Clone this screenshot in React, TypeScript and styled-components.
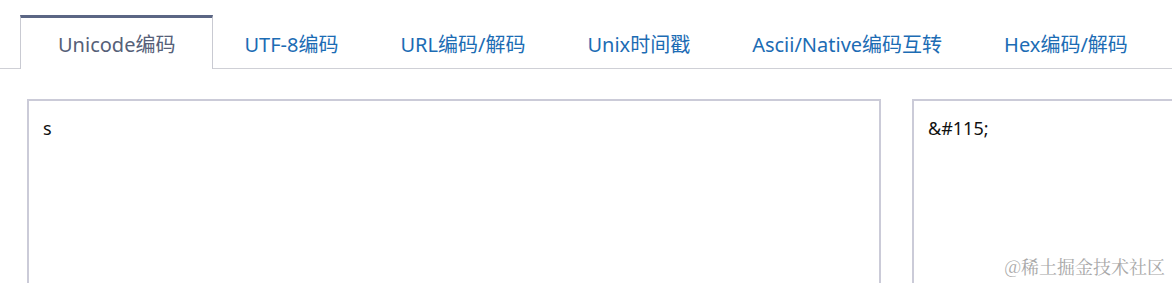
import React, { useState } from 'react';
import styled, { createGlobalStyle } from 'styled-components';

const TABS = [
  'Unicode编码',
  'UTF-8编码',
  'URL编码/解码',
  'Unix时间戳',
  'Ascii/Native编码互转',
  'Hex编码/解码',
];

const toEntities = (text: string) =>
  Array.from(text)
    .map((ch) => `&#${ch.codePointAt(0)};`)
    .join('');

const App = () => {
  const [active, setActive] = useState(0);
  const [source, setSource] = useState('s');

  return (
    <Page>
      <GlobalStyle />
      <TabBar>
        {TABS.map((label, i) => (
          <Tab key={label} $active={i === active} onClick={() => setActive(i)}>
            {label}
          </Tab>
        ))}
      </TabBar>
      <Panels>
        <Editor value={source} onChange={(e) => setSource(e.target.value)} />
        <Editor value={toEntities(source)} readOnly />
      </Panels>
      <Watermark>@稀土掘金技术社区</Watermark>
    </Page>
  );
};

export default App;

const GlobalStyle = createGlobalStyle`
  html, body {
    margin: 0;
    padding: 0;
    background: #fff;
    overflow: hidden;
  }
  body {
    font-family: "Noto Sans", "Noto Sans CJK SC", sans-serif;
  }
`;

const Page = styled.div`
  position: relative;
  width: 1172px;
  height: 283px;
  overflow: hidden;
  background: #fff;
`;

const TabBar = styled.div`
  display: flex;
  align-items: flex-end;
  margin-top: 15px;
  padding-left: 20px;
  height: 53px;
  border-bottom: 1px solid #cfd0d6;
`;

const Tab = styled.div<{ $active: boolean }>`
  box-sizing: border-box;
  height: ${(p) => (p.$active ? '54px' : '53px')};
  margin-bottom: ${(p) => (p.$active ? '-1px' : '0')};
  padding: 0 ${(p) => (p.$active ? '37px' : '30px')};
  display: flex;
  align-items: center;
  font-size: 20px;
  color: ${(p) => (p.$active ? '#566078' : '#1c6cb4')};
  background: #fff;
  border-top: 3px solid ${(p) => (p.$active ? '#5b6684' : 'transparent')};
  border-left: 1px solid ${(p) => (p.$active ? '#c9cad2' : 'transparent')};
  border-right: 1px solid ${(p) => (p.$active ? '#c9cad2' : 'transparent')};
  white-space: nowrap;
  cursor: pointer;
`;

const Panels = styled.div`
  display: flex;
  gap: 31px;
  margin-top: 30px;
  padding-left: 27px;
`;

const Editor = styled.textarea`
  box-sizing: border-box;
  flex: 0 0 854px;
  height: 240px;
  padding: 14px 14px;
  border: 2px solid #cbcbd8;
  border-radius: 0;
  outline: none;
  resize: none;
  font-family: "Noto Sans", "Noto Sans CJK SC", sans-serif;
  font-size: 18px;
  line-height: 26px;
  color: #111;
  background: #fff;
`;

const Watermark = styled.div`
  position: absolute;
  right: 7px;
  bottom: 4px;
  font-family: "Noto Serif CJK SC", "Noto Sans CJK SC", serif;
  font-size: 18px;
  color: #a8a8a8;
  pointer-events: none;
`;
